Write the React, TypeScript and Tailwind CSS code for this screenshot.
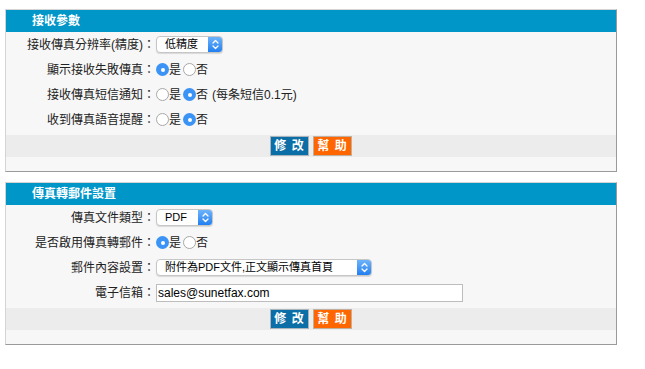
import React from 'react';

const font = { fontFamily: '"Liberation Sans", "Noto Sans CJK TC", sans-serif' };

const Radio = ({ checked }: { checked?: boolean }) =>
  checked ? (
    <span className="inline-flex w-[13px] h-[13px] rounded-full bg-[#3b93f5] items-center justify-center shrink-0">
      <span className="w-[4px] h-[4px] rounded-full bg-white"></span>
    </span>
  ) : (
    <span className="inline-block w-[13px] h-[13px] rounded-full bg-white border border-[#a8a8a8] shrink-0"></span>
  );

const RadioPair = ({ yes, note }: { yes: boolean; note?: string }) => (
  <div className="flex items-center">
    <Radio checked={yes} />
    <span>是</span>
    <span className="ml-[2px] flex"><Radio checked={!yes} /></span>
    <span>否</span>
    {note && <span className="ml-[4px]">{note}</span>}
  </div>
);

const Select = ({ value, width }: { value: string; width: string }) => (
  <div
    className={`${width} h-[17px] flex items-center bg-white border border-[#c6c6c6] rounded-[4px] shadow-[0_1px_1px_rgba(0,0,0,0.12)] overflow-hidden`}
  >
    <span className="flex-1 pl-[8px] text-[11px] leading-none text-black">{value}</span>
    <span className="w-[14px] h-full bg-gradient-to-b from-[#6cb3fa] to-[#1f7ff0] flex items-center justify-center">
      <svg width="7" height="11" viewBox="0 0 7 11" fill="none" stroke="white" strokeWidth="1.3" strokeLinecap="round" strokeLinejoin="round">
        <path d="M1 4 L3.5 1.5 L6 4" />
        <path d="M1 7 L3.5 9.5 L6 7" />
      </svg>
    </span>
  </div>
);

const Row = ({ label, children }: { label: string; children: React.ReactNode }) => (
  <div className="grid grid-cols-[149px_1fr] h-[25px] items-center">
    <div className="text-right">{label}：</div>
    <div className="pl-[1px] flex items-center">{children}</div>
  </div>
);

const Buttons = () => (
  <div className="h-[22px] bg-[#ececec] flex items-center justify-center gap-[4px]">
    <button className="w-[39px] h-[20px] bg-[#0b6ea6] border border-[#a9b4bc] text-white font-bold text-[12px] leading-none tracking-[1px]">
      修 改
    </button>
    <button className="w-[39px] h-[20px] bg-[#ff6600] border border-[#c0b0a0] text-white font-bold text-[12px] leading-none tracking-[1px]">
      幫 助
    </button>
  </div>
);

const Panel = ({ title, children }: { title: string; children: React.ReactNode }) => (
  <div className="w-[612px] bg-[#f7f7f7] border border-[#d4d4d4] border-r-[#9a9a9a] border-b-[#9a9a9a]">
    <div className="h-[22px] bg-[#0096c8] text-white font-bold text-[12px] flex items-center">
      <span className="ml-[26px]">{title}</span>
    </div>
    <div className="pb-[3px]">{children}</div>
    <Buttons />
    <div className="h-[14px]"></div>
  </div>
);

export default function App() {
  return (
    <div className="w-[645px] h-[369px] bg-white pt-[9px] pl-[5px] text-[12px] text-[#222]" style={font}>
      <Panel title="接收參數">
        <Row label="接收傳真分辨率(精度)">
          <Select value="低精度" width="w-[67px]" />
        </Row>
        <Row label="顯示接收失敗傳真">
          <RadioPair yes />
        </Row>
        <Row label="接收傳真短信通知">
          <RadioPair yes={false} note="(每条短信0.1元)" />
        </Row>
        <Row label="收到傳真語音提醒">
          <RadioPair yes={false} />
        </Row>
      </Panel>
      <div className="h-[10px]"></div>
      <Panel title="傳真轉郵件設置">
        <Row label="傳真文件類型">
          <Select value="PDF" width="w-[57px]" />
        </Row>
        <Row label="是否啟用傳真轉郵件">
          <RadioPair yes />
        </Row>
        <Row label="郵件內容設置">
          <Select value="附件為PDF文件,正文顯示傳真首頁" width="w-[216px]" />
        </Row>
        <Row label="電子信箱">
          <input
            readOnly
            value="sales@sunetfax.com"
            className="w-[307px] h-[18px] bg-white border border-[#bdbdbd] px-[1px] text-[12px] text-black outline-none"
            style={font}
          />
        </Row>
      </Panel>
    </div>
  );
}
